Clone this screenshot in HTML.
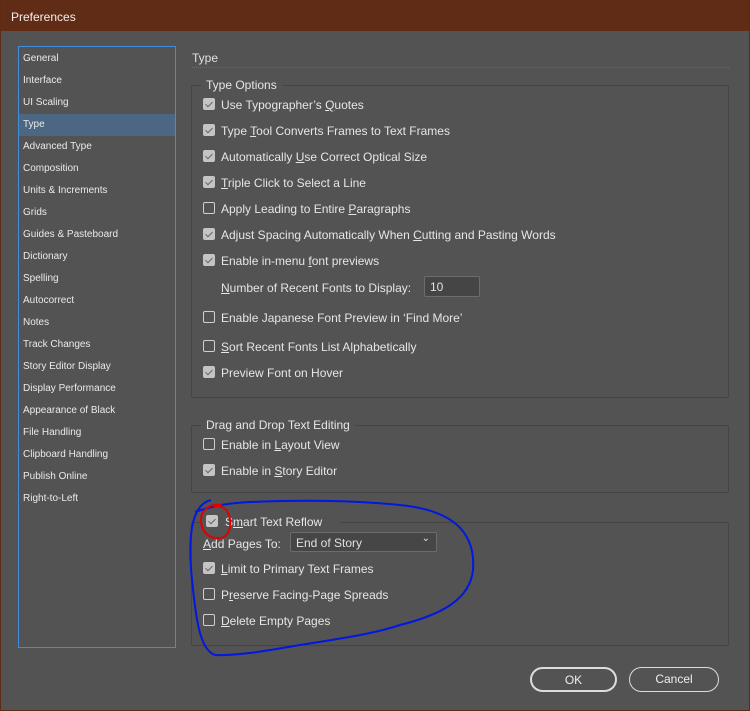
<!DOCTYPE html>
<html><head><meta charset="utf-8"><style>
*{margin:0;padding:0;box-sizing:border-box}
body{width:750px;height:711px;background:#535353;font-family:"Liberation Sans",sans-serif;color:#e0e0e0;position:relative;overflow:hidden}
.t{position:absolute;white-space:nowrap}
#title{position:absolute;left:0;top:0;width:750px;height:31px;background:#612c15;color:#f0f0f0;font-size:12px;padding:10px 0 0 11px}
#side{position:absolute;left:18px;top:46px;width:158px;height:602px;border:1px solid #3d8fdc;padding-top:1px}
#side div{height:22px;font-size:10px;line-height:22px;padding-left:4px;color:#eaeaea}
#side .sel{background:#4b6783}
.grp{position:absolute;left:191px;width:538px;border:1px solid #444;border-radius:2px}
.lg{position:absolute;background:#535353;font-size:12px;padding:0 5px;color:#e6e6e6}
.cb{position:absolute;width:12px;height:12px;border:1px solid #cfcfcf;border-radius:2px}
.cb.on{background:#c4c4c4;border-color:#c4c4c4}
.cb.on::after{content:"";position:absolute;left:3px;top:1px;width:3px;height:6px;border:solid #666;border-width:0 1.6px 1.6px 0;transform:rotate(45deg)}
.lb{position:absolute;font-size:12px;color:#e6e6e6;white-space:nowrap}
.btn{position:absolute;top:667px;height:25px;border:1.5px solid #ddd;border-radius:13px;font-size:12px;text-align:center;line-height:22px;color:#eee}
.edge{position:absolute;background:#5f2a14}
</style></head><body>
<div id="title">Preferences</div>
<div class="edge" style="left:0;top:0;width:1px;height:711px"></div>
<div class="edge" style="right:0;top:0;width:1px;height:711px"></div>
<div class="edge" style="left:0;bottom:0;width:750px;height:1px"></div>
<div id="side">
<div>General</div><div>Interface</div><div>UI Scaling</div><div class="sel">Type</div><div>Advanced Type</div><div>Composition</div><div>Units &amp; Increments</div><div>Grids</div><div>Guides &amp; Pasteboard</div><div>Dictionary</div><div>Spelling</div><div>Autocorrect</div><div>Notes</div><div>Track Changes</div><div>Story Editor Display</div><div>Display Performance</div><div>Appearance of Black</div><div>File Handling</div><div>Clipboard Handling</div><div>Publish Online</div><div>Right-to-Left</div>
</div>
<div class="t" style="left:192px;top:51px;font-size:12px">Type</div>
<div style="position:absolute;left:192px;top:67px;width:537px;border-top:1px dotted #6a6a6a"></div>

<div class="grp" style="top:85px;height:313px"></div>
<div class="lg" style="left:201px;top:78px">Type Options</div>
<div class="grp" style="top:425px;height:68px"></div>
<div class="lg" style="left:201px;top:418px">Drag and Drop Text Editing</div>
<div class="grp" style="top:522px;height:124px"></div>

<div class="cb on" style="left:203px;top:98px"></div><div class="lb" style="left:221px;top:98px">Use Typographer’s <u>Q</u>uotes</div>
<div class="cb on" style="left:203px;top:124px"></div><div class="lb" style="left:221px;top:124px">Type <u>T</u>ool Converts Frames to Text Frames</div>
<div class="cb on" style="left:203px;top:150px"></div><div class="lb" style="left:221px;top:150px">Automatically <u>U</u>se Correct Optical Size</div>
<div class="cb on" style="left:203px;top:176px"></div><div class="lb" style="left:221px;top:176px"><u>T</u>riple Click to Select a Line</div>
<div class="cb" style="left:203px;top:202px"></div><div class="lb" style="left:221px;top:202px">Apply Leading to Entire <u>P</u>aragraphs</div>
<div class="cb on" style="left:203px;top:228px"></div><div class="lb" style="left:221px;top:228px">Adjust Spacing Automatically When <u>C</u>utting and Pasting Words</div>
<div class="cb on" style="left:203px;top:254px"></div><div class="lb" style="left:221px;top:254px">Enable in-menu <u>f</u>ont previews</div>
<div class="lb" style="left:221px;top:281px"><u>N</u>umber of Recent Fonts to Display:</div>
<div style="position:absolute;left:424px;top:276px;width:56px;height:21px;border:1px solid #6c6c6c;border-radius:2px;background:#454545;font-size:12px;padding:3px 0 0 5px">10</div>
<div class="cb" style="left:203px;top:311px"></div><div class="lb" style="left:221px;top:311px">Enable Japanese Font Preview in ‘Find More’</div>
<div class="cb" style="left:203px;top:340px"></div><div class="lb" style="left:221px;top:340px"><u>S</u>ort Recent Fonts List Alphabetically</div>
<div class="cb on" style="left:203px;top:366px"></div><div class="lb" style="left:221px;top:366px">Preview Font on Hover</div>

<div class="cb" style="left:203px;top:438px"></div><div class="lb" style="left:221px;top:438px">Enable in <u>L</u>ayout View</div>
<div class="cb on" style="left:203px;top:464px"></div><div class="lb" style="left:221px;top:464px">Enable in <u>S</u>tory Editor</div>

<div class="lg" style="left:200px;top:512px;width:140px;height:18px"></div>
<div class="cb on" style="left:206px;top:515px"></div><div class="lb" style="left:225px;top:515px">S<u>m</u>art Text Reflow</div>
<div class="lb" style="left:203px;top:537px"><u>A</u>dd Pages To:</div>
<div style="position:absolute;left:290px;top:532px;width:147px;height:20px;border:1px solid #6c6c6c;border-radius:2px;background:#464646;font-size:12px;padding:3px 0 0 5px">End of Story<span style="position:absolute;right:6px;top:0;font-size:10px">&#8964;</span></div>
<div class="cb on" style="left:203px;top:562px"></div><div class="lb" style="left:221px;top:562px"><u>L</u>imit to Primary Text Frames</div>
<div class="cb" style="left:203px;top:588px"></div><div class="lb" style="left:221px;top:588px">P<u>r</u>eserve Facing-Page Spreads</div>
<div class="cb" style="left:203px;top:614px"></div><div class="lb" style="left:221px;top:614px"><u>D</u>elete Empty Pages</div>

<div class="btn" style="left:530px;width:87px;border-width:2px">OK</div>
<div class="btn" style="left:629px;width:90px">Cancel</div>

<svg style="position:absolute;left:0;top:0" width="750" height="711">
<path d="M211,500 C190,505 188,540 192,580 C196,620 200,650 215,655 C240,656 270,650 300,645 C330,640 370,635 400,625 C440,615 470,600 473,570 C476,530 450,510 400,505 C350,500 300,500 250,502 C230,503 215,505 195,512" fill="none" stroke="#0018e0" stroke-width="2"/>
<path d="M222,505 C210,503 200,510 201,522 C202,533 210,539 220,538 C230,537 232,525 229,515 C227,508 220,505 214,507" fill="none" stroke="#e00000" stroke-width="2"/>
</svg>
</body></html>
